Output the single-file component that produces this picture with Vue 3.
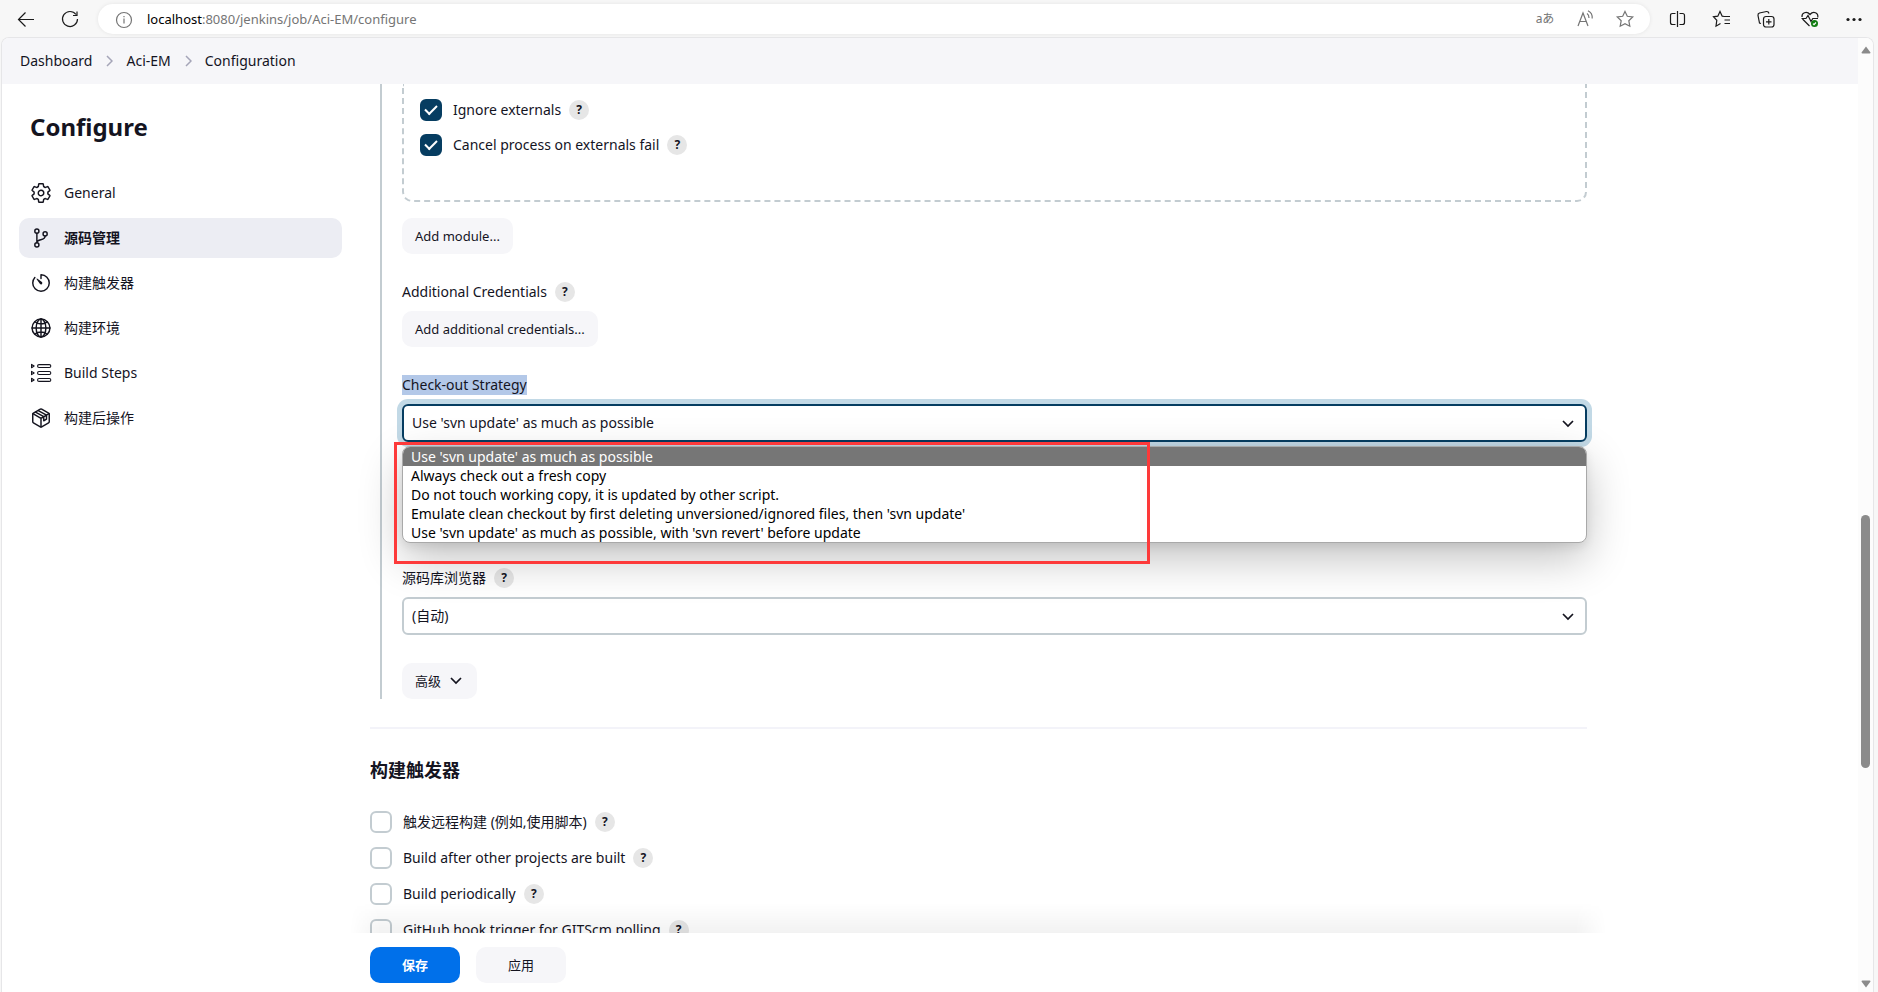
<template>
    <div class="browser">
        <header class="toolbar">
            <button class="tool" aria-label="Back">
                <svg viewBox="0 0 20 20"><path d="M18 10.500H2.500M9.500 3.500L2.500 10.500L9.500 17.500" /></svg>
            </button>
            <button class="tool refresh" aria-label="Refresh">
                <svg viewBox="0 0 20 20"><path d="M16 5.500A7.500 7.500 0 1 0 17.500 10M17 2.500V6.500H13" /></svg>
            </button>
            <div class="address">
                <svg class="info" viewBox="0 0 20 20"><circle cx="10" cy="11" r="7.500" /><path d="M10 9.500V14.500M10 7V8.200" /></svg>
                <p class="url"><span>localhost</span>:8080/jenkins/job/Aci-EM/configure</p>
                <button class="tool muted translate" aria-label="Translate">aあ</button>
                <button class="tool muted read" aria-label="Read aloud">
                    <svg viewBox="0 0 20 20"><path d="M3 17L8 4L13 17M4.800 12.500H11.200M12 4.500C13.500 5.500 14 7 14 9M13 1.800C16 3.300 17.500 6 17.200 9.500" /></svg>
                </button>
                <button class="tool muted" aria-label="Add to favorites">
                    <svg viewBox="0 0 20 20"><path :d="starPath" /></svg>
                </button>
            </div>
            <button class="tool" aria-label="Split screen">
                <svg viewBox="0 0 20 20"><path d="M7.500 4.500H4.500Q2.500 4.500 2.500 6.500V13.500Q2.500 15.500 4.500 15.500H7.500M11.500 4.500H14.500Q16.500 4.500 16.500 6.500V13.500Q16.500 15.500 14.500 15.500H11.500M9.500 2V18" /></svg>
            </button>
            <button class="tool" aria-label="Favorites">
                <svg viewBox="0 0 20 20"><path d="M12 7.500H18M12.500 11H18M12.500 14.500H18M12 7.500L10.200 7.200L8 2.500L5.800 7.200L1.500 7.800L4.800 11.300L4 17.200L8.500 14.500" /></svg>
            </button>
            <button class="tool" aria-label="Collections">
                <svg viewBox="0 0 20 20"><rect x="7.500" y="7.500" width="10.500" height="10.500" rx="2.500" /><path d="M12.800 10V15.500M10 12.800H15.500M5 14.500L3.500 14L2 6.500Q1.700 4.500 3.500 4L10.500 2.500Q12.500 2.300 13 4.500" /></svg>
            </button>
            <button class="tool" aria-label="Browser essentials">
                <svg viewBox="0 0 20 20">
                    <path d="M9.500 17L2.500 10M2 8C1.500 4 6.500 1.500 10 5.500C13.500 1.500 18.500 4 17.800 8.500M1.500 9.500H6L8 6.500L11 12.500L12.800 9.500H18" />
                    <circle class="ok" cx="14.500" cy="14.500" r="3.500" />
                    <path class="ok-tick" d="M13 14.700L14 15.700L16 13.500" />
                </svg>
            </button>
            <button class="tool" aria-label="More">
                <svg class="solid" viewBox="0 0 20 20"><circle cx="4" cy="10.500" r="1.600" /><circle cx="10" cy="10.500" r="1.600" /><circle cx="16" cy="10.500" r="1.600" /></svg>
            </button>
        </header>

        <div class="window">
            <div class="page">
                <nav class="breadcrumbs">
                    <template v-for="(crumb, i) in crumbs" :key="crumb">
                        <svg v-if="i" viewBox="0 0 8 12"><path d="M2 1L7 6L2 11" /></svg>
                        <a href="#">{{ crumb }}</a>
                    </template>
                </nav>

                <div class="columns">
                    <aside class="sidebar">
                        <h1>Configure</h1>
                        <a
                            v-for="item in menu"
                            :key="item.label"
                            href="#"
                            class="menu-item"
                            :class="{ active: item.active, thin: item.thin }"
                        >
                            <svg viewBox="0 0 512 512">
                                <path v-for="d in item.paths" :key="d" :d="d" />
                                <path v-if="item.fill" class="filled" :d="item.fill" />
                            </svg>
                            <span>{{ item.label }}</span>
                        </a>
                    </aside>

                    <main class="main">
                        <div class="scroll-area">
                            <section class="scm">
                                <div class="module">
                                    <div v-for="opt in externals" :key="opt.id" class="check-row">
                                        <input :id="opt.id" v-model="opt.checked" type="checkbox" />
                                        <label :for="opt.id">{{ opt.label }}</label>
                                        <button class="help" aria-label="Help">?</button>
                                    </div>
                                </div>
                                <button class="btn">Add module...</button>

                                <div class="field-label">
                                    <span>Additional Credentials</span>
                                    <button class="help" aria-label="Help">?</button>
                                </div>
                                <button class="btn">Add additional credentials...</button>

                                <div class="field-label">
                                    <label class="marked" for="strategy">Check-out Strategy</label>
                                </div>
                                <div class="select-wrap">
                                    <select id="strategy" v-model="strategy" class="focused">
                                        <option v-for="s in strategies" :key="s">{{ s }}</option>
                                    </select>
                                    <svg class="chevron" viewBox="0 0 12 8"><path d="M1 1L6 6L11 1" /></svg>
                                    <ul class="dropdown" role="listbox">
                                        <li
                                            v-for="s in strategies"
                                            :key="s"
                                            role="option"
                                            :aria-selected="s === strategy"
                                            :class="{ selected: s === strategy }"
                                            @click="strategy = s"
                                        >{{ s }}</li>
                                    </ul>
                                    <div class="callout"></div>
                                </div>

                                <div class="field-label browser-label">
                                    <label for="repo-browser">源码库浏览器</label>
                                    <button class="help" aria-label="Help">?</button>
                                </div>
                                <div class="select-wrap">
                                    <select id="repo-browser">
                                        <option>(自动)</option>
                                    </select>
                                    <svg class="chevron" viewBox="0 0 12 8"><path d="M1 1L6 6L11 1" /></svg>
                                </div>

                                <button class="btn advanced">
                                    高级
                                    <svg viewBox="0 0 12 8"><path d="M1 1L6 6L11 1" /></svg>
                                </button>
                            </section>

                            <section class="triggers">
                                <h2>构建触发器</h2>
                                <div v-for="opt in triggers" :key="opt.id" class="check-row">
                                    <input :id="opt.id" v-model="opt.checked" type="checkbox" />
                                    <label :for="opt.id">{{ opt.label }}</label>
                                    <button class="help" aria-label="Help">?</button>
                                </div>
                            </section>
                        </div>

                        <footer class="bottom-bar">
                            <button class="btn primary">保存</button>
                            <button class="btn">应用</button>
                        </footer>
                    </main>
                </div>
            </div>

            <div class="scrollbar">
                <svg viewBox="0 0 10 8"><path d="M5 0.500L9.500 6.500Q9.500 7.500 8.500 7.500H1.500Q0.500 7.500 0.500 6.500Z" /></svg>
                <div class="track"><div class="thumb"></div></div>
                <svg viewBox="0 0 10 8"><path d="M5 7.500L9.500 1.500Q9.500 0.500 8.500 0.500H1.500Q0.500 0.500 0.500 1.500Z" /></svg>
            </div>
        </div>
    </div>
</template>

<script setup>
import { ref } from 'vue';

const starPath = 'M10 2.500L12.300 7.300L17.700 8L13.800 11.700L14.800 17.200L10 14.600L5.200 17.200L6.200 11.700L2.300 8L7.700 7.300Z';

const crumbs = ['Dashboard', 'Aci-EM', 'Configuration'];

const menu = [
    {
        label: 'General',
        paths: [
            'M262 192a64 64 0 1 0 58 58 64 64 0 0 0-58-58z',
            'M416 256a154 154 0 0 1-1 21l45 35a11 11 0 0 1 3 14l-43 74a11 11 0 0 1-13 5l-45-18a16 16 0 0 0-15 1 164 164 0 0 1-22 13 16 16 0 0 0-9 12l-7 48a11 11 0 0 1-10 9h-86a11 11 0 0 1-11-9l-6-48a16 16 0 0 0-9-12 155 155 0 0 1-22-13 16 16 0 0 0-15-1l-45 18a11 11 0 0 1-13-5l-43-74a11 11 0 0 1 3-14l38-30a16 16 0 0 0 6-14c-1-8-1-17 0-25a16 16 0 0 0-6-14l-38-30a11 11 0 0 1-3-13l43-74a11 11 0 0 1 13-5l45 18a16 16 0 0 0 15-1 164 164 0 0 1 22-13 16 16 0 0 0 9-12l6-48a11 11 0 0 1 11-9h86a11 11 0 0 1 10 9l7 48a16 16 0 0 0 9 12 155 155 0 0 1 22 13 16 16 0 0 0 15 1l45-18a11 11 0 0 1 13 5l43 74a11 11 0 0 1-3 14l-38 30a16 16 0 0 0-6 14z',
        ],
    },
    {
        label: '源码管理',
        active: true,
        paths: [
            'M208 96a48 48 0 1 1-96 0 48 48 0 1 1 96 0z',
            'M208 416a48 48 0 1 1-96 0 48 48 0 1 1 96 0z',
            'M400 160a48 48 0 1 1-96 0 48 48 0 1 1 96 0z',
            'M160 368V144M352 208c0 128-192 48-192 160',
        ],
    },
    {
        label: '构建触发器',
        paths: ['M113 128A192 192 0 0 0 64 254c-1 106 86 194 192 194s192-86 192-192c0-105-84-190-188-192h-4v88'],
        fill: 'M233 279l-79-113a8 8 0 0 1 11-12l113 79a32 32 0 0 1-45 46z',
    },
    {
        label: '构建环境',
        paths: [
            'M256 48C141 48 48 141 48 256s93 208 208 208 208-93 208-208S371 48 256 48z',
            'M256 48c-58 0-113 93-113 208s55 208 113 208 113-93 113-208S314 48 256 48z',
            'M117 117c38 27 87 44 139 44s100-17 139-44M395 395c-38-27-87-44-139-44s-100 17-139 44M256 48v416M464 256H48',
        ],
    },
    {
        label: 'Build Steps',
        thin: true,
        paths: [
            'M210 60H450a34 34 0 0 1 0 68H210a34 34 0 0 1 0-68z',
            'M210 222H450a34 34 0 0 1 0 68H210a34 34 0 0 1 0-68z',
            'M210 384H450a34 34 0 0 1 0 68H210a34 34 0 0 1 0-68z',
            'M36 56L96 94L36 132ZM36 218L96 256L36 294ZM36 380L96 418L36 456Z',
        ],
    },
    {
        label: '构建后操作',
        paths: [
            'M448 342V170a32 32 0 0 0-16-27L272 51a32 32 0 0 0-32 0L80 143a32 32 0 0 0-16 27v172a32 32 0 0 0 16 27l160 92a32 32 0 0 0 32 0l160-92a32 32 0 0 0 16-27z',
            'M69 154L256 262L443 154M256 462V262M128 118L320 226V320L384 284V190L192 82',
        ],
    },
];

const externals = ref([
    { id: 'ignore-externals', label: 'Ignore externals', checked: true },
    { id: 'cancel-externals', label: 'Cancel process on externals fail', checked: true },
]);

const strategies = [
    "Use 'svn update' as much as possible",
    'Always check out a fresh copy',
    'Do not touch working copy, it is updated by other script.',
    "Emulate clean checkout by first deleting unversioned/ignored files, then 'svn update'",
    "Use 'svn update' as much as possible, with 'svn revert' before update",
];
const strategy = ref(strategies[0]);

const triggers = ref([
    { id: 'remote', label: '触发远程构建 (例如,使用脚本)', checked: false },
    { id: 'after', label: 'Build after other projects are built', checked: false },
    { id: 'periodic', label: 'Build periodically', checked: false },
    { id: 'github', label: 'GitHub hook trigger for GITScm polling', checked: false },
]);
</script>

<style>
body {
    margin: 0;
    overflow: hidden;
}
</style>

<style scoped>
* {
    box-sizing: border-box;
}

.browser {
    display: flex;
    flex-direction: column;
    height: 100vh;
    background: #f7f7f7;
    color: #14141f;
    font-family: "Noto Sans", "Noto Sans CJK SC", sans-serif;
    font-size: 14px;
    line-height: 20px;
}

button {
    border: 0;
    padding: 0;
    background: none;
    color: inherit;
    font: inherit;
}

svg {
    fill: none;
    stroke: currentColor;
    flex: none;
}

a {
    color: inherit;
    text-decoration: none;
}

.toolbar {
    display: flex;
    align-items: center;
    gap: 24px;
    height: 37px;
    padding: 0 14px 0 16px;
    color: #1b1b1b;
}

.tool {
    width: 20px;
    height: 20px;
    flex: none;
}

.tool svg,
.info {
    display: block;
    width: 20px;
    height: 20px;
    stroke-width: 1.2;
}

.tool .solid {
    fill: currentColor;
    stroke: none;
}

.ok {
    fill: #107c10;
    stroke: none;
}

.ok-tick {
    stroke: #fff;
}

.address {
    display: flex;
    align-items: center;
    gap: 20px;
    flex: 1;
    height: 30px;
    margin: 0 -6px;
    padding: 0 15px 0 16px;
    border-radius: 15px;
    background: #fff;
    box-shadow: 0 0 4px rgba(0, 0, 0, 0.08);
    color: #757575;
}

.url {
    flex: 1;
    margin: 0 0 0 -7px;
    font-size: 13px;
}

.url span {
    color: #000;
}

.muted {
    color: #757575;
}

.translate {
    font-size: 12px;
    white-space: nowrap;
}

.window {
    display: flex;
    flex: 1;
    min-height: 0;
    margin: 0 4px 0 1px;
    border: 1px solid #e6e6e8;
    border-bottom: 0;
    border-radius: 8px 8px 0 0;
    background: #fff;
    overflow: hidden;
}

.page {
    display: flex;
    flex-direction: column;
    flex: 1;
    min-width: 0;
}

.breadcrumbs {
    display: flex;
    align-items: center;
    gap: 13px;
    height: 46px;
    padding: 0 18px;
    background: #f6f6f9;
}

.breadcrumbs svg {
    width: 8px;
    height: 12px;
    color: #a5a5b8;
    stroke-width: 1.5;
}

.columns {
    display: flex;
    flex: 1;
    min-height: 0;
}

.sidebar {
    display: flex;
    flex-direction: column;
    gap: 5px;
    width: 340px;
    flex: none;
    padding: 25px 0 0 17px;
}

.sidebar h1 {
    margin: 0 0 23px;
    padding-left: 11px;
    font-size: 24px;
    line-height: 36px;
    font-weight: 700;
}

.menu-item {
    display: flex;
    align-items: center;
    gap: 12px;
    height: 40px;
    padding: 0 11px;
    border-radius: 10px;
}

.menu-item svg {
    width: 22px;
    height: 22px;
    stroke-width: 34;
    stroke-linejoin: round;
    stroke-linecap: round;
}

.menu-item .filled {
    fill: currentColor;
    stroke: none;
}

.thin svg {
    stroke-width: 26;
}

.active {
    background: #ecedf3;
    font-weight: 600;
}

.main {
    display: flex;
    flex-direction: column;
    flex: 1;
    min-width: 0;
}

.scroll-area {
    flex: 1;
    min-height: 0;
    padding: 0 271px 0 28px;
    overflow: hidden;
}

.scm {
    display: flex;
    flex-direction: column;
    align-items: flex-start;
    margin-left: 10px;
    padding-left: 20px;
    border-left: 2px solid #c3ccd1;
}

.module {
    display: flex;
    flex-direction: column;
    gap: 13px;
    align-self: stretch;
    margin-bottom: 16px;
    padding: 15px 16px 44px;
    border: 2px dashed #c3ccd1;
    border-top: 0;
    border-radius: 0 0 10px 10px;
}

.check-row {
    display: flex;
    align-items: center;
    height: 22px;
}

.check-row label {
    margin: 0 8px 0 11px;
}

input[type="checkbox"] {
    appearance: none;
    width: 22px;
    height: 22px;
    margin: 0;
    border: 2px solid #c3ccd1;
    border-radius: 6px;
    background: #fff;
}

input[type="checkbox"]:checked {
    display: grid;
    place-items: center;
    border-color: #063d61;
    background: #063d61;
}

input[type="checkbox"]:checked::after {
    content: "";
    width: 10px;
    height: 5px;
    margin-bottom: 3px;
    border: solid #fff;
    border-width: 0 0 2px 2px;
    transform: rotate(-45deg);
}

.help {
    width: 20px;
    height: 20px;
    border-radius: 50%;
    background: #e6e6e6;
    font-size: 12px;
    font-weight: 700;
}

.btn {
    height: 36px;
    padding: 0 13px;
    border-radius: 10px;
    background: #f6f6f9;
    font-size: 13px;
}

.field-label {
    display: flex;
    align-items: center;
    gap: 8px;
    height: 20px;
    margin: 28px 0 9px;
}

.marked {
    background: #b3c8e8;
}

.browser-label {
    margin-top: 126px;
}

.select-wrap {
    position: relative;
    align-self: stretch;
}

select {
    display: block;
    appearance: none;
    width: 100%;
    height: 38px;
    padding: 0 8px;
    border: 2px solid #c3ccd1;
    border-radius: 6px;
    background: transparent;
    color: inherit;
    font: inherit;
}

.focused {
    border-color: #063d61;
    box-shadow: 0 0 0 5px #c2d9e6;
}

.chevron {
    position: absolute;
    top: 16px;
    right: 13px;
}

.chevron,
.advanced svg {
    width: 12px;
    height: 8px;
    stroke-width: 1.7;
}

/* option list and its marker lie over the form */
.dropdown {
    position: absolute;
    top: 42px;
    left: 0;
    right: 0;
    z-index: 1;
    margin: 0;
    padding: 0;
    border: 1px solid #a9a9a9;
    border-radius: 8px;
    background: #fff;
    box-shadow: 0 16px 44px rgba(0, 0, 0, 0.24), 0 4px 10px rgba(0, 0, 0, 0.08);
    color: #000;
    list-style: none;
    overflow: hidden;
}

.dropdown li {
    padding: 0 8px;
    line-height: 19px;
}

.dropdown .selected {
    background: #767676;
    color: #fff;
}

.callout {
    position: absolute;
    top: 38px;
    left: -8px;
    z-index: 2;
    width: 756px;
    height: 122px;
    border: 3px solid #fd3a3a;
    pointer-events: none;
}

.advanced {
    display: flex;
    align-items: center;
    gap: 9px;
    margin-top: 28px;
    padding-right: 15px;
}

.triggers {
    display: flex;
    flex-direction: column;
    gap: 14px;
    margin-top: 28px;
    border-top: 2px solid #f3f3f9;
}

.triggers h2 {
    margin: 28px 0 14px;
    font-size: 18px;
    line-height: 26px;
    font-weight: 700;
}

.bottom-bar {
    position: relative;
    z-index: 3;
    display: flex;
    gap: 16px;
    height: 59px;
    flex: none;
    padding: 14px 28px 0;
    background: #fff;
}

/* soft shade fading upward above the bar */
.bottom-bar::before {
    content: "";
    position: absolute;
    bottom: 100%;
    left: 8px;
    right: 252px;
    height: 30px;
    background: linear-gradient(transparent, rgba(0, 0, 0, 0.05));
    mask-image: linear-gradient(to right, transparent, #000 30px, #000 calc(100% - 30px), transparent);
}

.bottom-bar .btn {
    width: 90px;
}

.bottom-bar .primary {
    background: #0070ea;
    color: #fff;
    font-weight: 700;
}

.scrollbar {
    display: flex;
    flex-direction: column;
    align-items: center;
    gap: 6px;
    width: 15px;
    flex: none;
    padding: 8px 0 4px;
    background: #fcfcfc;
}

.scrollbar svg {
    width: 10px;
    height: 8px;
    fill: #8b8b8b;
    stroke: none;
}

.track {
    display: flex;
    flex-direction: column;
    flex: 1;
    width: 9px;
}

.track::before {
    content: "";
    flex: 455;
}

.track::after {
    content: "";
    flex: 206;
}

.thumb {
    flex: 253;
    border-radius: 5px;
    background: #8b8b8b;
}
</style>
